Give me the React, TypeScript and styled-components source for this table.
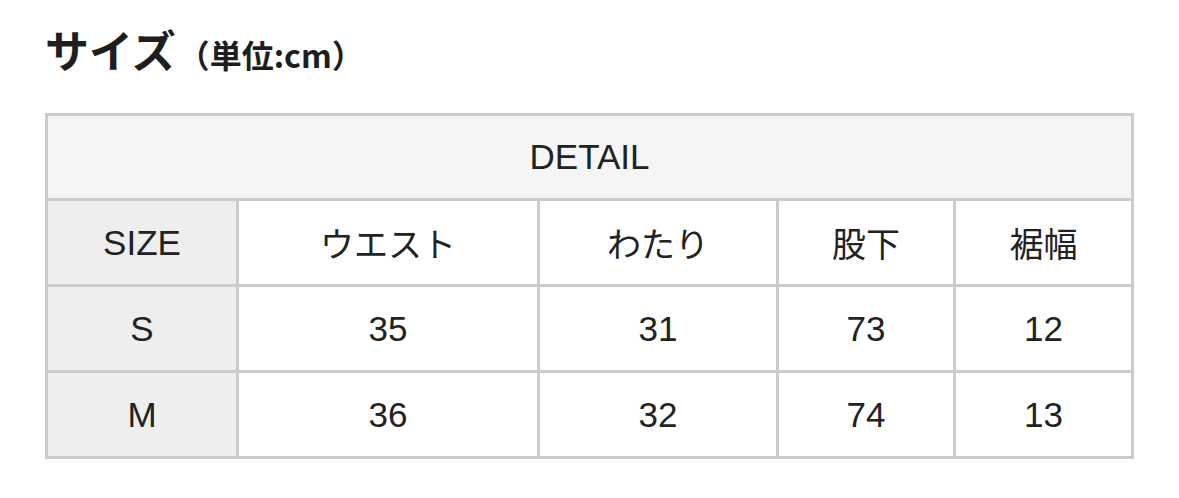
import React from 'react'
import styled, { createGlobalStyle } from 'styled-components'

const GlobalStyle = createGlobalStyle`
  html, body {
    margin: 0;
    padding: 0;
    background: #ffffff;
  }
  body {
    font-family: 'Noto Sans CJK JP', 'Noto Sans', sans-serif;
    color: #222222;
  }
`

const Page = styled.div`
  width: 1179px;
  height: 498px;
  padding: 17px 0 0 45px;
  box-sizing: border-box;
`

const Title = styled.h2`
  margin: 0 0 27px 0;
  font-size: 44px;
  font-weight: 700;
  line-height: 64px;
  color: #1e1e1e;
  display: flex;
  align-items: baseline;
`

const Unit = styled.span`
  font-size: 32px;
  font-weight: 700;
  margin-left: 2px;
`

const Table = styled.table`
  table-layout: fixed;
  width: 1089px;
  border-collapse: separate;
  border-spacing: 3px;
  background: #cccccc;
`

const Cell = styled.td<{ $head?: boolean }>`
  padding: 0;
  height: 83px;
  text-align: center;
  vertical-align: middle;
  font-family: 'Liberation Sans', 'Noto Sans CJK JP', sans-serif;
  font-size: 35px;
  font-weight: 400;
  color: #222222;
  background: ${(p) => (p.$head ? '#eeeeee' : '#ffffff')};
`

const DetailCell = styled(Cell)`
  height: 82px;
  background: #f5f5f5;
`

const JpLabel = styled.span`
  font-family: 'Noto Sans CJK JP', sans-serif;
  font-size: 34px;
`

const columns = ['ウエスト', 'わたり', '股下', '裾幅']
const widths = [188, 298, 236, 174, 175]

const rows = [
  { size: 'S', values: [35, 31, 73, 12] },
  { size: 'M', values: [36, 32, 74, 13] },
]

export default function App() {
  return (
    <>
      <GlobalStyle />
      <Page>
        <Title>
          サイズ<Unit>（単位:cm）</Unit>
        </Title>
        <Table>
          <colgroup>
            {widths.map((w, i) => (
              <col key={i} style={{ width: w }} />
            ))}
          </colgroup>
          <tbody>
            <tr>
              <DetailCell colSpan={5}>DETAIL</DetailCell>
            </tr>
            <tr>
              <Cell $head>SIZE</Cell>
              {columns.map((c) => (
                <Cell key={c}>
                  <JpLabel>{c}</JpLabel>
                </Cell>
              ))}
            </tr>
            {rows.map((r) => (
              <tr key={r.size}>
                <Cell $head>{r.size}</Cell>
                {r.values.map((v, i) => (
                  <Cell key={i}>{v}</Cell>
                ))}
              </tr>
            ))}
          </tbody>
        </Table>
      </Page>
    </>
  )
}
